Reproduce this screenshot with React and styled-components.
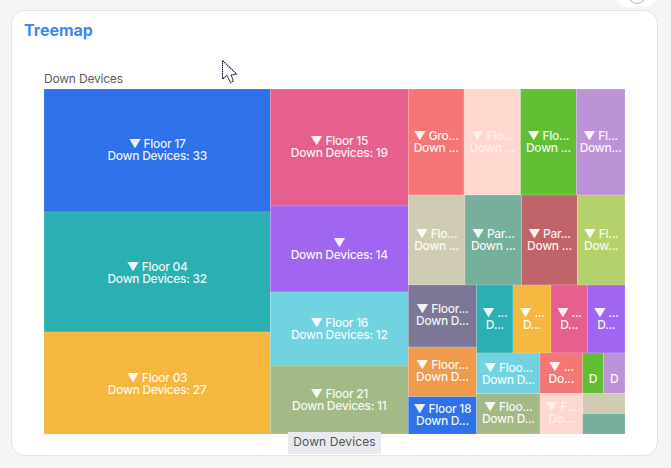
import React from "react";
import styled, { createGlobalStyle } from "styled-components";

const Global = createGlobalStyle`
  html, body { margin: 0; padding: 0; background: #f5f5f5; }
  body { width: 671px; height: 468px; overflow: hidden; font-family: Inter, "Liberation Sans", sans-serif; }
`;
const Page = styled.div`
  position: relative;
  width: 671px;
  height: 468px;
  padding: 10px 13px 12px 11px;
  box-sizing: border-box;
  overflow: hidden;
`;
const Corner = styled.div`
  position: absolute;
  top: -14px;
  right: 15px;
  width: 38px;
  height: 21px;
  background: #fff;
  border-radius: 10px;
  display: flex;
  justify-content: center;
  align-items: flex-end;
  padding-bottom: 3px;
  box-sizing: border-box;
`;
const CornerRing = styled.span`
  width: 18px;
  height: 18px;
  border: 1px solid #b5b5b5;
  border-radius: 50%;
  box-sizing: border-box;
`;
const Card = styled.section`
  position: relative;
  height: 100%;
  box-sizing: border-box;
  background: #fff;
  border: 1px solid #e1e1f0;
  border-radius: 14px;
  padding: 9px 32px 0 12px;
  display: flex;
  flex-direction: column;
`;
const Title = styled.h2`
  margin: 0;
  font-size: 16px;
  line-height: 20px;
  font-weight: 700;
  color: #3d87fb;
`;
const ChartArea = styled.div`
  margin: 31px 0 0 20px;
  display: flex;
  flex-direction: column;
`;
const SeriesName = styled.div`
  font-size: 12px;
  line-height: 15px;
  height: 18px;
  letter-spacing: -0.2px;
  color: #5c5c5c;
`;
const Chart = styled.svg`
  display: block;
  width: 581px;
  height: 345px;
`;
const TileLabel = styled.text`
  font-family: Inter, "Liberation Sans", sans-serif;
  font-size: 12px;
  font-weight: 500;
  letter-spacing: -0.27px;
  fill: #fff;
  fill-opacity: ${(p) => p.$fade};
  text-anchor: middle;
`;
const Breadcrumb = styled.div`
  position: absolute;
  left: 288px;
  top: 432px;
  width: 93px;
  height: 22px;
  background: #e8eaf0;
  color: #555;
  font-size: 12px;
  line-height: 20px;
  letter-spacing: 0.1px;
  text-align: center;
`;
const Cursor = styled.svg`
  position: absolute;
  left: 221px;
  top: 59px;
  width: 18px;
  height: 26px;
`;

const X0 = 44, Y0 = 89;
const tiles = [
  [44, 89, 270.3, 212, "#2f71e8", "▼ Floor 17", "Down Devices: 33", 0],
  [44, 212, 270.3, 332, "#2ab0b2", "▼ Floor 04", "Down Devices: 32", 2],
  [44, 332, 270.3, 434, "#f5b73f", "▼ Floor 03", "Down Devices: 27", 2],
  [270.3, 89, 408.3, 206, "#e65f8e", "▼ Floor 15", "Down Devices: 19", 0],
  [270.3, 206, 408.3, 292, "#a066f2", "▼", "Down Devices: 14", 1],
  [270.3, 292, 408.3, 366, "#71d2e0", "▼ Floor 16", "Down Devices: 12", 1],
  [270.3, 366, 408.3, 434, "#a3b986", "▼ Floor 21", "Down Devices: 11", 0.5],
  [408.3, 89, 464, 195, "#f47676", "▼ Gro...", "Down ...", 1],
  [464, 89, 520.5, 195, "#ffd7cf", "▼ Flo...", "Down ...", 1],
  [520.5, 89, 576.3, 195, "#62bf33", "▼ Flo...", "Down ...", 1],
  [576.3, 89, 625, 195, "#bd93d8", "▼ Fl...", "Down...", 1],
  [408.3, 195, 465, 285, "#d0ccb4", "▼ Flo...", "Down ...", 0.5],
  [465, 195, 521.6, 285, "#76af9c", "▼ Par...", "Down ...", 0.5],
  [521.6, 195, 577.3, 285, "#c06469", "▼ Par...", "Down ...", 0.5],
  [577.3, 195, 625, 285, "#b5d16c", "▼ Fl...", "Dow...", 0.5],
  [408.3, 285, 476.6, 347, "#7c7796", "▼ Floor...", "Down D...", 0],
  [476.6, 285, 513, 353, "#2ab0b2", "▼ ...", "D...", 1],
  [513, 285, 551, 353, "#f5b73f", "▼ ...", "D...", 1],
  [551, 285, 587.3, 353, "#e65f8e", "▼ ...", "D...", 1],
  [587.3, 285, 625, 353, "#a066f2", "▼ ...", "D...", 1],
  [408.3, 347, 476.6, 396.6, "#f09a4c", "▼ Floor...", "Down D...", 0],
  [408.3, 396.6, 476.6, 434, "#2f71e8", "▼ Floor 18", "Down D...", 0.5],
  [476.6, 353, 540, 393.6, "#71d2e0", "▼ Floo...", "Down D...", 1.5],
  [476.6, 393.6, 540, 434, "#a3b986", "▼ Floo...", "Down D...", 0],
  [540, 353, 582.6, 393.6, "#f47676", "▼ ...", "Do...", 1],
  [540, 393.6, 582.6, 434, "#ffd7cf", "▼ F...", "Do...", 0],
  [582.6, 353, 603.3, 393.6, "#62bf33", "", "D", 6],
  [603.3, 353, 625, 393.6, "#bd93d8", "", "D", 6],
  [582.6, 393.6, 625, 413.6, "#d0ccb4", "", "", 0],
  [582.6, 413.6, 625, 434, "#76af9c", "", "", 0],
];

export default function App() {
  return (
    <Page>
      <Global />
      <Corner><CornerRing /></Corner>
      <Card>
        <Title>Treemap</Title>
        <ChartArea>
          <SeriesName>Down Devices</SeriesName>
          <Chart viewBox="0 0 581 345">
            {tiles.map(([x1, y1, x2, y2, fill, a, b, dy], i) => {
              const cx = (x1 + x2) / 2 - X0;
              const cy = (y1 + y2) / 2 - Y0 + dy;
              const fade = fill === "#ffd7cf" ? 0.6 : 0.92;
              return (
                <g key={i}>
                  <rect x={x1 - X0} y={y1 - Y0} width={x2 - x1} height={y2 - y1} fill={fill} stroke="#fff" strokeOpacity="0.3" strokeWidth="0.5" />
                  {a && <TileLabel $fade={fade} x={cx} y={cy - 3}>{a}</TileLabel>}
                  {b && <TileLabel $fade={fade} x={cx} y={a ? cy + 9 : cy + 4}>{b}</TileLabel>}
                </g>
              );
            })}
          </Chart>
        </ChartArea>
      </Card>
      <Breadcrumb>Down Devices</Breadcrumb>
      <Cursor viewBox="0 0 18 26">
        <path d="M1.5 1.5 L1.5 20 L6 16.5 L9.5 23.5 L12.5 22 L10 16 L15.5 15 Z" fill="#fff" stroke="#1e1e3c" strokeWidth="1.1" strokeDasharray="1.6 0.5" />
      </Cursor>
    </Page>
  );
}
